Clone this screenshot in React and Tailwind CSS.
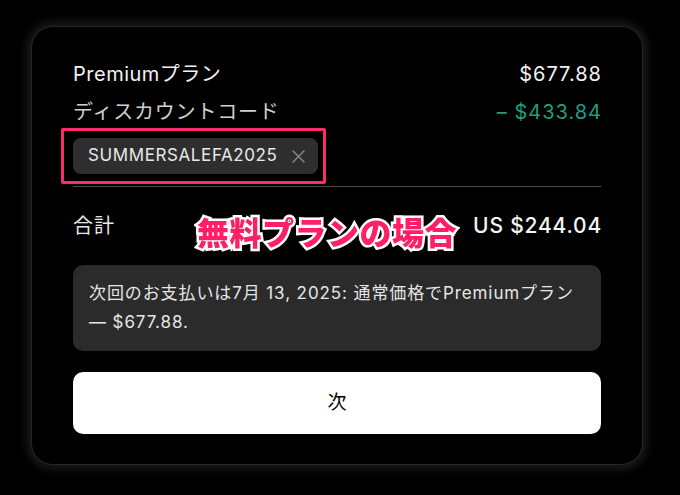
import React from "react";

const font = { fontFamily: '"Inter", "Noto Sans CJK JP", sans-serif' };

export default function App() {
  return (
    <div className="w-[680px] h-[495px] bg-black flex pt-[26px] pl-[31px]" style={font}>
      <div className="relative w-[612px] h-[439px] rounded-[22px] bg-black border border-[#262626] shadow-[0_0_10px_4px_rgba(40,40,40,0.7)] px-[41px] pt-[32px]">
        {/* price rows */}
        <div className="flex justify-between items-center h-[30px] text-[20px] tracking-[0.5px] text-[#f2f2f2]">
          <span>Premiumプラン</span>
          <span className="tracking-[1px] -mr-[1px]">$677.88</span>
        </div>
        <div className="flex justify-between items-center h-[30px] mt-[8px] text-[20px] tracking-[0.8px]">
          <span className="text-[#d0d0d0]">ディスカウントコード</span>
          <span className="text-[#1f9e82] tracking-[1px] -mr-[1px]">– $433.84</span>
        </div>

        {/* coupon chip with highlight */}
        <div className="-ml-[12px] mt-[1px] w-[265px] h-[56px] border-[3px] border-[#ff2a6d] rounded-[2px] flex items-center pl-[9px]">
          <div className="w-[245px] h-[36px] rounded-[8px] bg-[#2e2e2e] flex items-center justify-between pl-[15px] pr-[13px]">
            <span className="text-[17px] text-[#e8e8e8] tracking-[0.6px]">SUMMERSALEFA2025</span>
            <svg width="13" height="13" viewBox="0 0 13 13" fill="none">
              <path d="M1 1 L12 12 M12 1 L1 12" stroke="#8a8a8a" strokeWidth="1.4" strokeLinecap="round" />
            </svg>
          </div>
        </div>

        <div className="h-px bg-[#4a4a4a] mt-[2px]" />

        {/* total */}
        <div className="flex justify-between items-center h-[30px] mt-[24px] text-[20px]">
          <span className="text-[#e8e8e8] tracking-[1px]">合計</span>
          <span className="text-[#f5f5f5] font-medium text-[21px] tracking-[0.8px] -mr-[1px]">US $244.04</span>
        </div>

        <div className="mt-[24px] rounded-[10px] bg-[#2b2b2b] px-[16px] py-[14px] text-[17px] leading-[29px] tracking-[0.9px] text-[#e6e6e6]">
          次回のお支払いは7月 13, 2025: 通常価格でPremiumプラン — $677.88.
        </div>

        <button className="mt-[21px] w-full h-[62px] rounded-[10px] bg-white text-black text-[19px] flex items-center justify-center">
          次
        </button>

        {/* annotation overlay */}
        <div className="absolute left-[165px] top-[183px] text-[32px] font-black text-[#ff1f66] tracking-[0.5px] [paint-order:stroke_fill] [-webkit-text-stroke:5px_white] [filter:drop-shadow(0_0_3px_rgba(0,0,0,0.9))]">
          無料プランの場合
        </div>
      </div>
    </div>
  );
}
